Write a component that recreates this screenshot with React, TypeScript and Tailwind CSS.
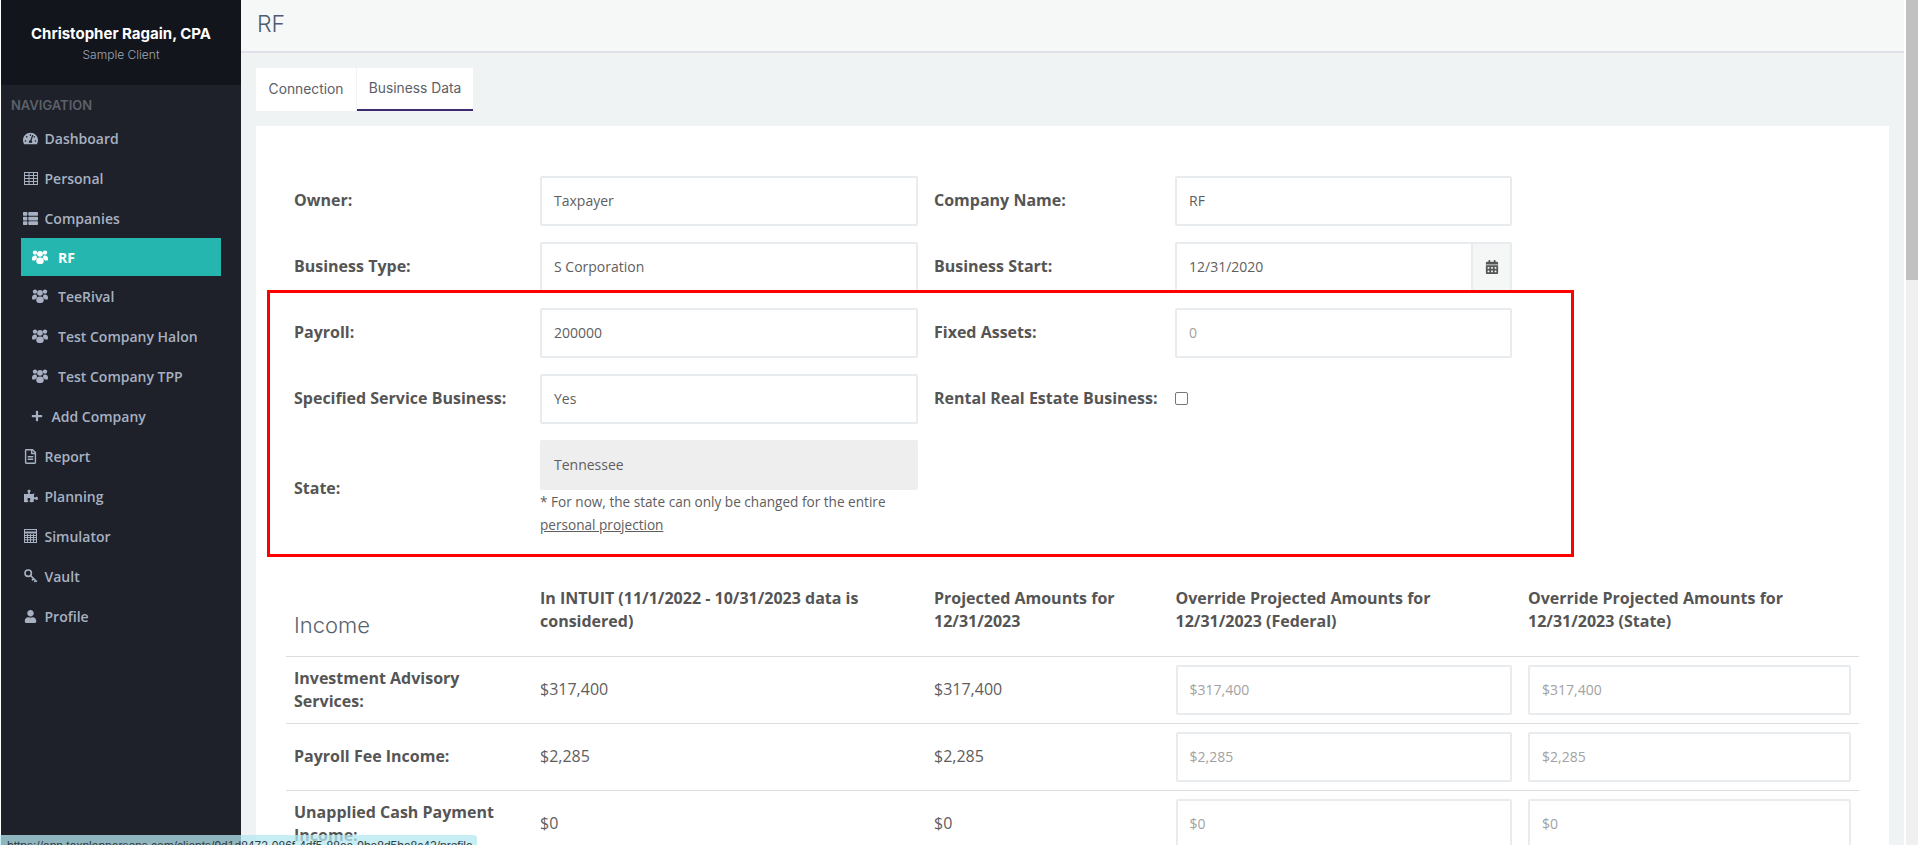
import { ReactNode } from "react";
import {
  FaCalendarAlt,
  FaPlus,
  FaPuzzlePiece,
  FaRegFileAlt,
  FaTachometerAlt,
  FaThList,
  FaUser,
} from "react-icons/fa";

const openSans = "font-['Open_Sans',sans-serif]";
const inter = "font-['Inter',sans-serif]";

// outlined grid, the package's table icon has a solid header
function GridIcon() {
  return (
    <svg width="14" height="13" viewBox="0 0 14 13" fill="none" stroke="currentColor" strokeWidth="1">
      <rect x="0.5" y="0.5" width="13" height="12" />
      <path d="M0.5 3.5H13.5M0.5 6.5H13.5M0.5 9.5H13.5M5 0.5V12.5M9.5 0.5V12.5" />
    </svg>
  );
}

function CalculatorIcon() {
  return (
    <svg width="13" height="14" viewBox="0 0 13 14" fill="none" stroke="currentColor" strokeWidth="1">
      <rect x="0.5" y="0.5" width="12" height="13" />
      <path d="M0.5 3.5H12.5" strokeWidth="2" />
      <path d="M0.5 6.5H12.5M0.5 8.5H12.5M0.5 10.8H12.5M3.5 5V13.5M6.5 5V13.5M9.5 5V13.5" />
    </svg>
  );
}

function KeyIcon() {
  return (
    <svg width="14" height="14" viewBox="0 0 14 14" fill="none" stroke="currentColor" strokeWidth="1.6">
      <circle cx="4.2" cy="4.2" r="3.2" />
      <path d="M6.5 6.5L12.8 12.8M9.6 9.6L8 11.4M11.6 11.6L10.4 13" />
    </svg>
  );
}

// three heads over bulky shoulders, taller than the package's users icon
function UsersIcon() {
  return (
    <svg width="16" height="14" viewBox="0 0 16 14" fill="currentColor">
      <circle cx="3" cy="2.6" r="2.2" />
      <circle cx="13" cy="2.6" r="2.2" />
      <circle cx="8" cy="3.8" r="2.9" />
      <path d="M0 9.2C0 6.6 1 5.4 3 5.4L4.7 5.8C4.6 7 5 8 5.8 8.6C4.3 9 3.4 9.8 3.2 10.6H1C0.4 10.6 0 10.1 0 9.2Z" />
      <path d="M16 9.2C16 6.6 15 5.4 13 5.4L11.3 5.8C11.4 7 11 8 10.2 8.6C11.7 9 12.6 9.8 12.8 10.6H15C15.6 10.6 16 10.1 16 9.2Z" />
      <path d="M4.2 11C4.2 8.6 5.5 7.4 8 7.4C10.5 7.4 11.8 8.6 11.8 11C11.8 13 10.6 14 9.2 14H6.8C5.4 14 4.2 13 4.2 11Z" />
    </svg>
  );
}

const topNav = [
  { label: "Dashboard", icon: <FaTachometerAlt size={15} /> },
  { label: "Personal", icon: <GridIcon /> },
  { label: "Companies", icon: <FaThList size={15} /> },
];

const bottomNav = [
  { label: "Report", icon: <FaRegFileAlt size={15} /> },
  { label: "Planning", icon: <FaPuzzlePiece size={14} /> },
  { label: "Simulator", icon: <CalculatorIcon /> },
  { label: "Vault", icon: <KeyIcon /> },
  { label: "Profile", icon: <FaUser size={13} /> },
];

const companies = ["TeeRival", "Test Company Halon", "Test Company TPP"];

const incomeRows = [
  { label: "Investment Advisory Services:", value: "$317,400" },
  { label: "Payroll Fee Income:", value: "$2,285" },
  { label: "Unapplied Cash Payment Income:", value: "$0" },
];

function NavItem({ icon, label }: { icon: ReactNode; label: string }) {
  return (
    <div className="flex h-10 items-center pl-[22px]">
      <span className="flex w-[15px] justify-center">{icon}</span>
      <span className="ml-[6.5px] text-[14px] font-semibold">{label}</span>
    </div>
  );
}

function Sidebar() {
  return (
    <aside className={`ml-px w-[240px] shrink-0 bg-[#1e2129] text-[#a7b1c2] ${openSans}`}>
      <div className="flex h-[85px] flex-col items-center bg-[#13151d] pt-[24px]">
        <div className={`text-[15px] leading-5 font-bold text-white ${inter}`}>
          Christopher Ragain, CPA
        </div>
        <div className={`mt-[1px] text-[12px] leading-5 font-light text-[#a0a6b1] ${inter}`}>
          Sample Client
        </div>
      </div>
      <div className={`mt-[10px] pl-[10px] text-[13px] leading-5 font-semibold text-[#5c6069] ${inter}`}>
        NAVIGATION
      </div>
      <div className="mt-[3px]">
        {topNav.map((item) => (
          <NavItem key={item.label} {...item} />
        ))}
      </div>
      <div className="ml-[20px] flex h-[38px] w-[200px] items-center bg-[#25b7af] pl-[11px] text-white">
        <UsersIcon />
        <span className="ml-[10px] text-[14px] font-bold">RF</span>
      </div>
      <div>
        {companies.map((name) => (
          <div key={name} className="flex h-10 items-center pl-[31px]">
            <UsersIcon />
            <span className="ml-[10px] text-[14px] font-semibold">{name}</span>
          </div>
        ))}
        <div className="flex h-10 items-center pl-[30px]">
          <FaPlus size={12} />
          <span className="ml-[8.5px] text-[14px] font-semibold">Add Company</span>
        </div>
        {bottomNav.map((item) => (
          <NavItem key={item.label} {...item} />
        ))}
      </div>
    </aside>
  );
}

function Field({
  value,
  className = "",
  muted = false,
  disabled = false,
}: {
  value: string;
  className?: string;
  muted?: boolean;
  disabled?: boolean;
}) {
  return (
    <div
      className={`flex h-[50px] items-center rounded-[2px] border-2 px-3 pb-[2px] text-[14px] ${
        disabled ? "border-[#eeeeee] bg-[#eeeeee]" : "border-[#e9ecef] bg-white"
      } ${muted ? "text-[#a2a2a2]" : "text-[#5e5e5e]"} ${className}`}
    >
      {value}
    </div>
  );
}

function FormRow({ label, children }: { label: string; children: ReactNode }) {
  return (
    <div className="mb-4 flex items-center">
      <div className="w-[246px] shrink-0 pb-[2px] text-[16px] font-bold text-[#555555]">{label}</div>
      {children}
    </div>
  );
}

function BusinessForm() {
  return (
    <div className="flex pl-[38px]">
      <div className="w-[394px]">
        <FormRow label="Owner:">
          <Field value="Taxpayer" className="w-[378px] shrink-0" />
        </FormRow>
        <FormRow label="Business Type:">
          <Field value="S Corporation" className="w-[378px] shrink-0" />
        </FormRow>
        <FormRow label="Payroll:">
          <Field value="200000" className="w-[378px] shrink-0" />
        </FormRow>
        <FormRow label="Specified Service Business:">
          <Field value="Yes" className="w-[378px] shrink-0" />
        </FormRow>
        <div className="flex items-center">
          <div className="w-[246px] shrink-0 pb-[2px] text-[16px] font-bold text-[#555555]">State:</div>
          <div className="w-[378px] shrink-0">
            <Field value="Tennessee" disabled />
            <p className="mb-[1px] text-[13.6px] leading-[23px] text-[#5e5e5e]">
              * For now, the state can only be changed for the entire{" "}
              <span className="underline">personal projection</span>
            </p>
          </div>
        </div>
      </div>
      <div className="ml-[246px] w-[578px]">
        <SecondColumn />
      </div>
    </div>
  );
}

function SecondRow({ label, children }: { label: string; children: ReactNode }) {
  return (
    <div className="mb-4 flex h-[50px] items-center">
      <div className="w-[241px] shrink-0 pb-[2px] text-[16px] font-bold text-[#555555]">{label}</div>
      {children}
    </div>
  );
}

function SecondColumn() {
  return (
    <>
      <SecondRow label="Company Name:">
        <Field value="RF" className="w-[337px]" />
      </SecondRow>
      <SecondRow label="Business Start:">
        <div className="flex w-[337px]">
          <Field value="12/31/2020" className="flex-1 rounded-r-none border-r-0" />
          <div className="flex h-[50px] w-[41px] items-center justify-center rounded-r-[2px] border-2 border-[#e9ecef] bg-[#f5f6f6] text-[#555555]">
            <FaCalendarAlt size={14} />
          </div>
        </div>
      </SecondRow>
      <SecondRow label="Fixed Assets:">
        <Field value="0" muted className="w-[337px]" />
      </SecondRow>
      <SecondRow label="Rental Real Estate Business:">
        <div className="mb-[2px] h-[13px] w-[13px] rounded-[2px] border border-[#767676] bg-white" />
      </SecondRow>
    </>
  );
}

function IncomeTable() {
  const columns = "grid-cols-[254px_394px_241.5px_352.5px_331px]";
  return (
    <div className="mt-[50px] ml-[30px] w-[1573px]">
      <div className={`grid ${columns} h-[69px] text-[16px] leading-[23px] font-bold text-[#555555]`}>
        <div className={`mt-[23px] pl-2 text-[22px] leading-[30px] font-light text-[#5a6270] ${inter}`}>
          Income
        </div>
        <div className="pr-4">In INTUIT (11/1/2022 - 10/31/2023 data is considered)</div>
        <div className="pr-4">Projected Amounts for 12/31/2023</div>
        <div className="pr-4">
          Override Projected Amounts for
          <br />
          12/31/2023 (Federal)
        </div>
        <div className="pr-4">
          Override Projected Amounts for
          <br />
          12/31/2023 (State)
        </div>
      </div>
      {incomeRows.map((row) => (
        <div
          key={row.label}
          className={`grid ${columns} h-[67px] items-center border-t border-[#dddddd] text-[16px] text-[#5e5e5e]`}
        >
          <div className="pr-[30px] pb-[1px] pl-2 text-[16px] leading-[23px] font-bold text-[#555555]">
            {row.label}
          </div>
          <div className="pb-[2px]">{row.value}</div>
          <div className="pb-[2px]">{row.value}</div>
          <div>
            <Field value={row.value} muted className="w-[336.5px]" />
          </div>
          <div>
            <Field value={row.value} muted className="w-[323px]" />
          </div>
        </div>
      ))}
    </div>
  );
}

export default function App() {
  return (
    <div className={`relative flex h-[845px] w-[1918px] overflow-hidden bg-white ${openSans}`}>
      <Sidebar />
      <main className="w-[1663px] shrink-0 bg-[#eff3f4]">
        <header className="flex h-[53px] items-center border-b-2 border-[#e0e0e8] bg-[#f6f7f7] pb-[2px] pl-[16px]">
          <h1 className={`text-[23px] font-light text-[#4f5b72] ${inter}`}>RF</h1>
        </header>
        <div className={`mt-[15px] ml-[15px] flex h-[43px] text-[13.8px] text-[#5b6068] ${inter}`}>
          <div className="flex w-[100px] items-center justify-center bg-white">Connection</div>
          <div className="ml-px flex w-[116px] items-center justify-center border-b-2 border-[#3f2a6e] bg-white">
            Business Data
          </div>
        </div>
        <section className="relative mt-[15px] ml-[15px] h-[719px] w-[1633px] bg-white pt-[50px]">
          <BusinessForm />
          <IncomeTable />
          {/* review highlight drawn on top of the form */}
          <div className="absolute top-[164px] left-[11px] h-[267px] w-[1307px] border-[3px] border-[#ff0000]" />
        </section>
      </main>
      <div className="ml-[2px] w-[12px] shrink-0 bg-[#f1f0f0]">
        <div className="h-[280px] bg-[#c1c1c1]" />
      </div>
      {/* browser status bubble over the bottom left corner */}
      <div className="absolute bottom-0 left-0 h-[10px] w-[477px] overflow-hidden rounded-tr-[3px] bg-[#b6e8f1]/75 pl-[7px] font-['Liberation_Sans',sans-serif] text-[12px] leading-[22px] whitespace-nowrap text-[#333b40]">
        https://app.taxplanpersons.com/clients/9d1d8472-086f-4df5-88ee-9be8d5ba8c42/profile
      </div>
    </div>
  );
}
